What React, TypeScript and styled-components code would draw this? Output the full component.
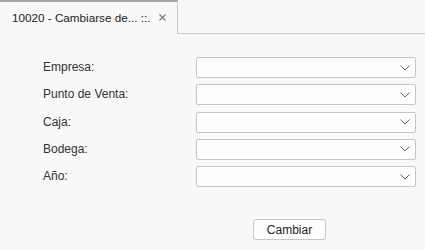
import React from 'react';
import styled, { createGlobalStyle } from 'styled-components';

const GlobalStyle = createGlobalStyle`
  html, body {
    margin: 0;
    padding: 0;
    background: #f8f8f8;
    font-family: 'Liberation Sans', Arial, sans-serif;
    color: #333;
  }
`;

const Page = styled.div`
  width: 425px;
  height: 250px;
  background: #f8f8f8;
  display: flex;
  flex-direction: column;
`;

const TabBar = styled.div`
  display: flex;
  height: 34px;
  box-sizing: border-box;
`;

const Tab = styled.div`
  width: 178px;
  box-sizing: border-box;
  border-top: 2px solid #a9a9a9;
  border-right: 1px solid #c8c8c8;
  display: flex;
  align-items: center;
  padding: 0 0 2px 12px;
  font-size: 11.7px;
  color: #222;
`;

const TabTitle = styled.span`
  flex: 1;
  white-space: nowrap;
`;

const TabClose = styled.span`
  width: 10px;
  margin-right: 10px;
  display: flex;
  align-items: center;
  justify-content: center;
`;

const TabFiller = styled.div`
  flex: 1;
  border-bottom: 1px solid #c8c8c8;
`;

const Form = styled.div`
  display: grid;
  grid-template-columns: 153px 220px;
  row-gap: 6.3px;
  padding: 23px 0 0 43px;
`;

const Label = styled.label`
  font-size: 12px;
  color: #333;
  height: 21px;
  line-height: 21px;
`;

const Select = styled.div`
  height: 21px;
  box-sizing: border-box;
  border: 1px solid #c6c6c6;
  border-radius: 2px;
  background: #fdfdfd;
  display: flex;
  align-items: center;
  justify-content: flex-end;
  padding-right: 5px;
`;

const Actions = styled.div`
  padding: 32px 0 0 253px;
`;

const Button = styled.button`
  width: 73px;
  height: 21px;
  box-sizing: border-box;
  border: 1px solid #c6c6c6;
  border-radius: 3px;
  background: #fdfdfd;
  font-family: 'Liberation Sans', Arial, sans-serif;
  font-size: 12px;
  color: #222;
  padding: 0;
`;

const Chevron = () => (
  <svg width="10" height="6" viewBox="0 0 10 6">
    <path d="M0.5 0.5 L5 5 L9.5 0.5" fill="none" stroke="#666" strokeWidth="1" />
  </svg>
);

const fields = ['Empresa:', 'Punto de Venta:', 'Caja:', 'Bodega:', 'Año:'];

export default function App() {
  return (
    <Page>
      <GlobalStyle />
      <TabBar>
        <Tab>
          <TabTitle>10020 - Cambiarse de... ::.</TabTitle>
          <TabClose>
            <svg width="7" height="7" viewBox="0 0 7 7">
              <path d="M0.5 0.5 L6.5 6.5 M6.5 0.5 L0.5 6.5" stroke="#777" strokeWidth="1.1" />
            </svg>
          </TabClose>
        </Tab>
        <TabFiller />
      </TabBar>
      <Form>
        {fields.map((f) => (
          <React.Fragment key={f}>
            <Label>{f}</Label>
            <Select>
              <Chevron />
            </Select>
          </React.Fragment>
        ))}
      </Form>
      <Actions>
        <Button>Cambiar</Button>
      </Actions>
    </Page>
  );
}
